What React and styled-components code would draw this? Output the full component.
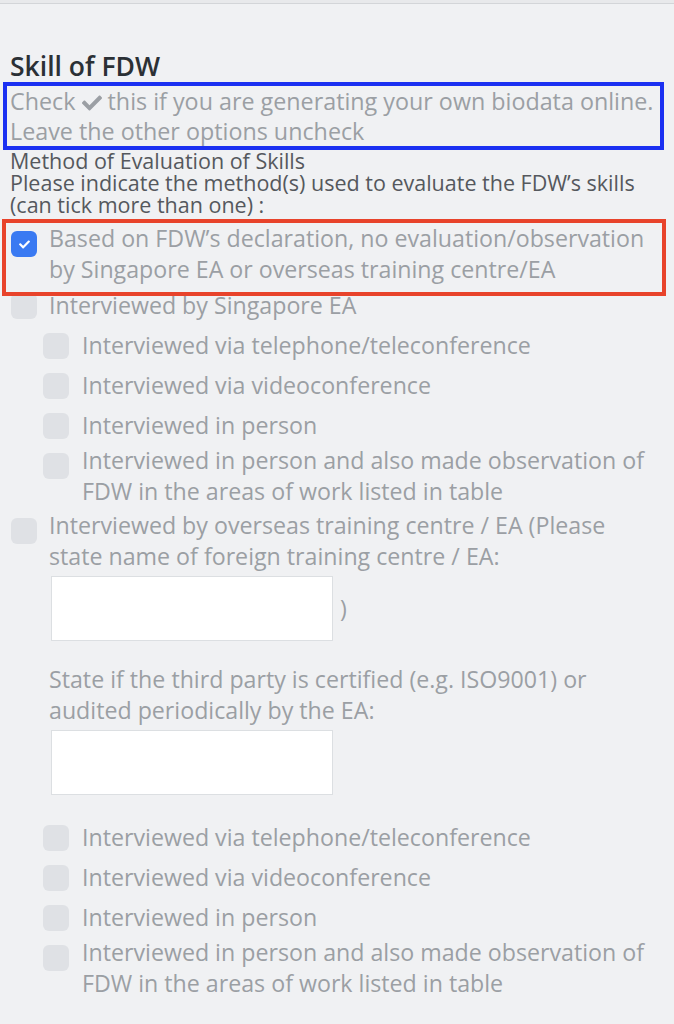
import styled, { createGlobalStyle } from "styled-components";
import { FaCheck } from "react-icons/fa";

const GlobalStyle = createGlobalStyle`
    html, body {
        margin: 0;
        padding: 0;
        background: #f0f1f3;
    }
    * {
        box-sizing: border-box;
    }
`;

const Page = styled.div`
    width: 674px;
    min-height: 1024px;
    background: #f0f1f3;
    font-family: "Open Sans", "Liberation Sans", sans-serif;
    overflow: hidden;
`;

const TopBar = styled.div`
    height: 4px;
    background: #e8e9eb;
    border-bottom: 1px solid #d3d5d8;
`;

const Content = styled.div`
    padding: 0 10px;
`;

const Title = styled.h2`
    margin: 46px 0 0;
    font-size: 26.5px;
    line-height: 32px;
    font-weight: 600;
    color: #2b3035;
`;

const Annotated = styled.div`
    position: relative;
    margin-top: ${props => props.top}px;

    &::after {
        content: "";
        position: absolute;
        top: -4px;
        bottom: ${props => props.bottom}px;
        left: ${props => props.left}px;
        right: ${props => props.right}px;
        border: 4px solid ${props => props.color};
        pointer-events: none;
    }
`;

const Note = styled.p`
    margin: 0;
    font-size: 23.3px;
    line-height: 30px;
    color: #9b9fa4;

    svg {
        vertical-align: -3px;
    }
`;

const Intro = styled.p`
    margin: 4px 0 0;
    font-size: 21.5px;
    line-height: 22px;
    color: #55585d;
`;

const List = styled.div`
    display: flex;
    flex-direction: column;
    margin-left: ${props => props.indent || 0}px;
    margin-top: ${props => props.top || 0}px;
`;

const Row = styled.div`
    display: flex;
    align-items: center;
    min-height: 40px;
    margin-top: ${props => props.top || 0}px;
`;

const Box = styled.span`
    flex: none;
    align-self: flex-start;
    width: 26px;
    height: 26px;
    margin: 8px 0 0 ${props => props.offset || 0}px;
    border-radius: 6px;
    background: ${props => (props.checked ? "#3a7af2" : "#dfe1e5")};
    display: flex;
    align-items: center;
    justify-content: center;
    color: #ffffff;
`;

const Label = styled.div`
    flex: 1;
    margin-left: ${props => props.gap}px;
    font-size: 23.2px;
    line-height: 31px;
    color: #9b9fa4;
`;

const FieldRow = styled.div`
    display: flex;
    align-items: center;
    margin-top: ${props => props.top}px;
    margin-left: 2px;
`;

const Field = styled.input`
    width: 282px;
    height: 65px;
    border: 1px solid #dcdfe2;
    background: #ffffff;
    outline: none;
`;

const Paren = styled.span`
    margin-left: 7px;
    font-size: 23px;
    color: #9b9fa4;
`;

const SubText = styled.div`
    margin-top: 23px;
`;

function Option({ checked, sub, children }) {
    return (
        <Row>
            <Box checked={checked} offset={sub ? 0 : 1}>
                {checked && <FaCheck size={11} />}
            </Box>
            <Label gap={sub ? 13 : 12}>{children}</Label>
        </Row>
    );
}

function InterviewOptions({ top }) {
    return (
        <List indent={33} top={top}>
            <Option sub>Interviewed via telephone/teleconference</Option>
            <Option sub>Interviewed via videoconference</Option>
            <Option sub>Interviewed in person</Option>
            <Option sub>
                Interviewed in person and also made observation of<br />
                FDW in the areas of work listed in table
            </Option>
        </List>
    );
}

export default function App() {
    return (
        <Page>
            <GlobalStyle />
            <TopBar />
            <Content>
                <Title>Skill of FDW</Title>
                <Annotated top={4} bottom={-4} left={-7} right={0} color="#1b30f2">
                    <Note>
                        Check <FaCheck size={20} /> this if you are generating your own biodata online.<br />
                        Leave the other options uncheck
                    </Note>
                </Annotated>
                <Intro>
                    Method of Evaluation of Skills<br />
                    Please indicate the method(s) used to evaluate the FDW’s skills<br />
                    (can tick more than one) :
                </Intro>
                <Annotated top={7} bottom={-11} left={-8} right={-2} color="#e8432b">
                    <Option checked>
                        Based on FDW’s declaration, no evaluation/observation<br />
                        by Singapore EA or overseas training centre/EA
                    </Option>
                </Annotated>
                <Option>Interviewed by Singapore EA</Option>
                <InterviewOptions />
                <Row top={3}>
                    <Box offset={1} />
                    <Label gap={12}>
                        Interviewed by overseas training centre / EA (Please<br />
                        state name of foreign training centre / EA:
                        <FieldRow top={4}>
                            <Field type="text" />
                            <Paren>)</Paren>
                        </FieldRow>
                        <SubText>
                            State if the third party is certified (e.g. ISO9001) or<br />
                            audited periodically by the EA:
                        </SubText>
                        <FieldRow top={4}>
                            <Field type="text" />
                        </FieldRow>
                    </Label>
                </Row>
                <InterviewOptions top={22} />
            </Content>
        </Page>
    );
}
